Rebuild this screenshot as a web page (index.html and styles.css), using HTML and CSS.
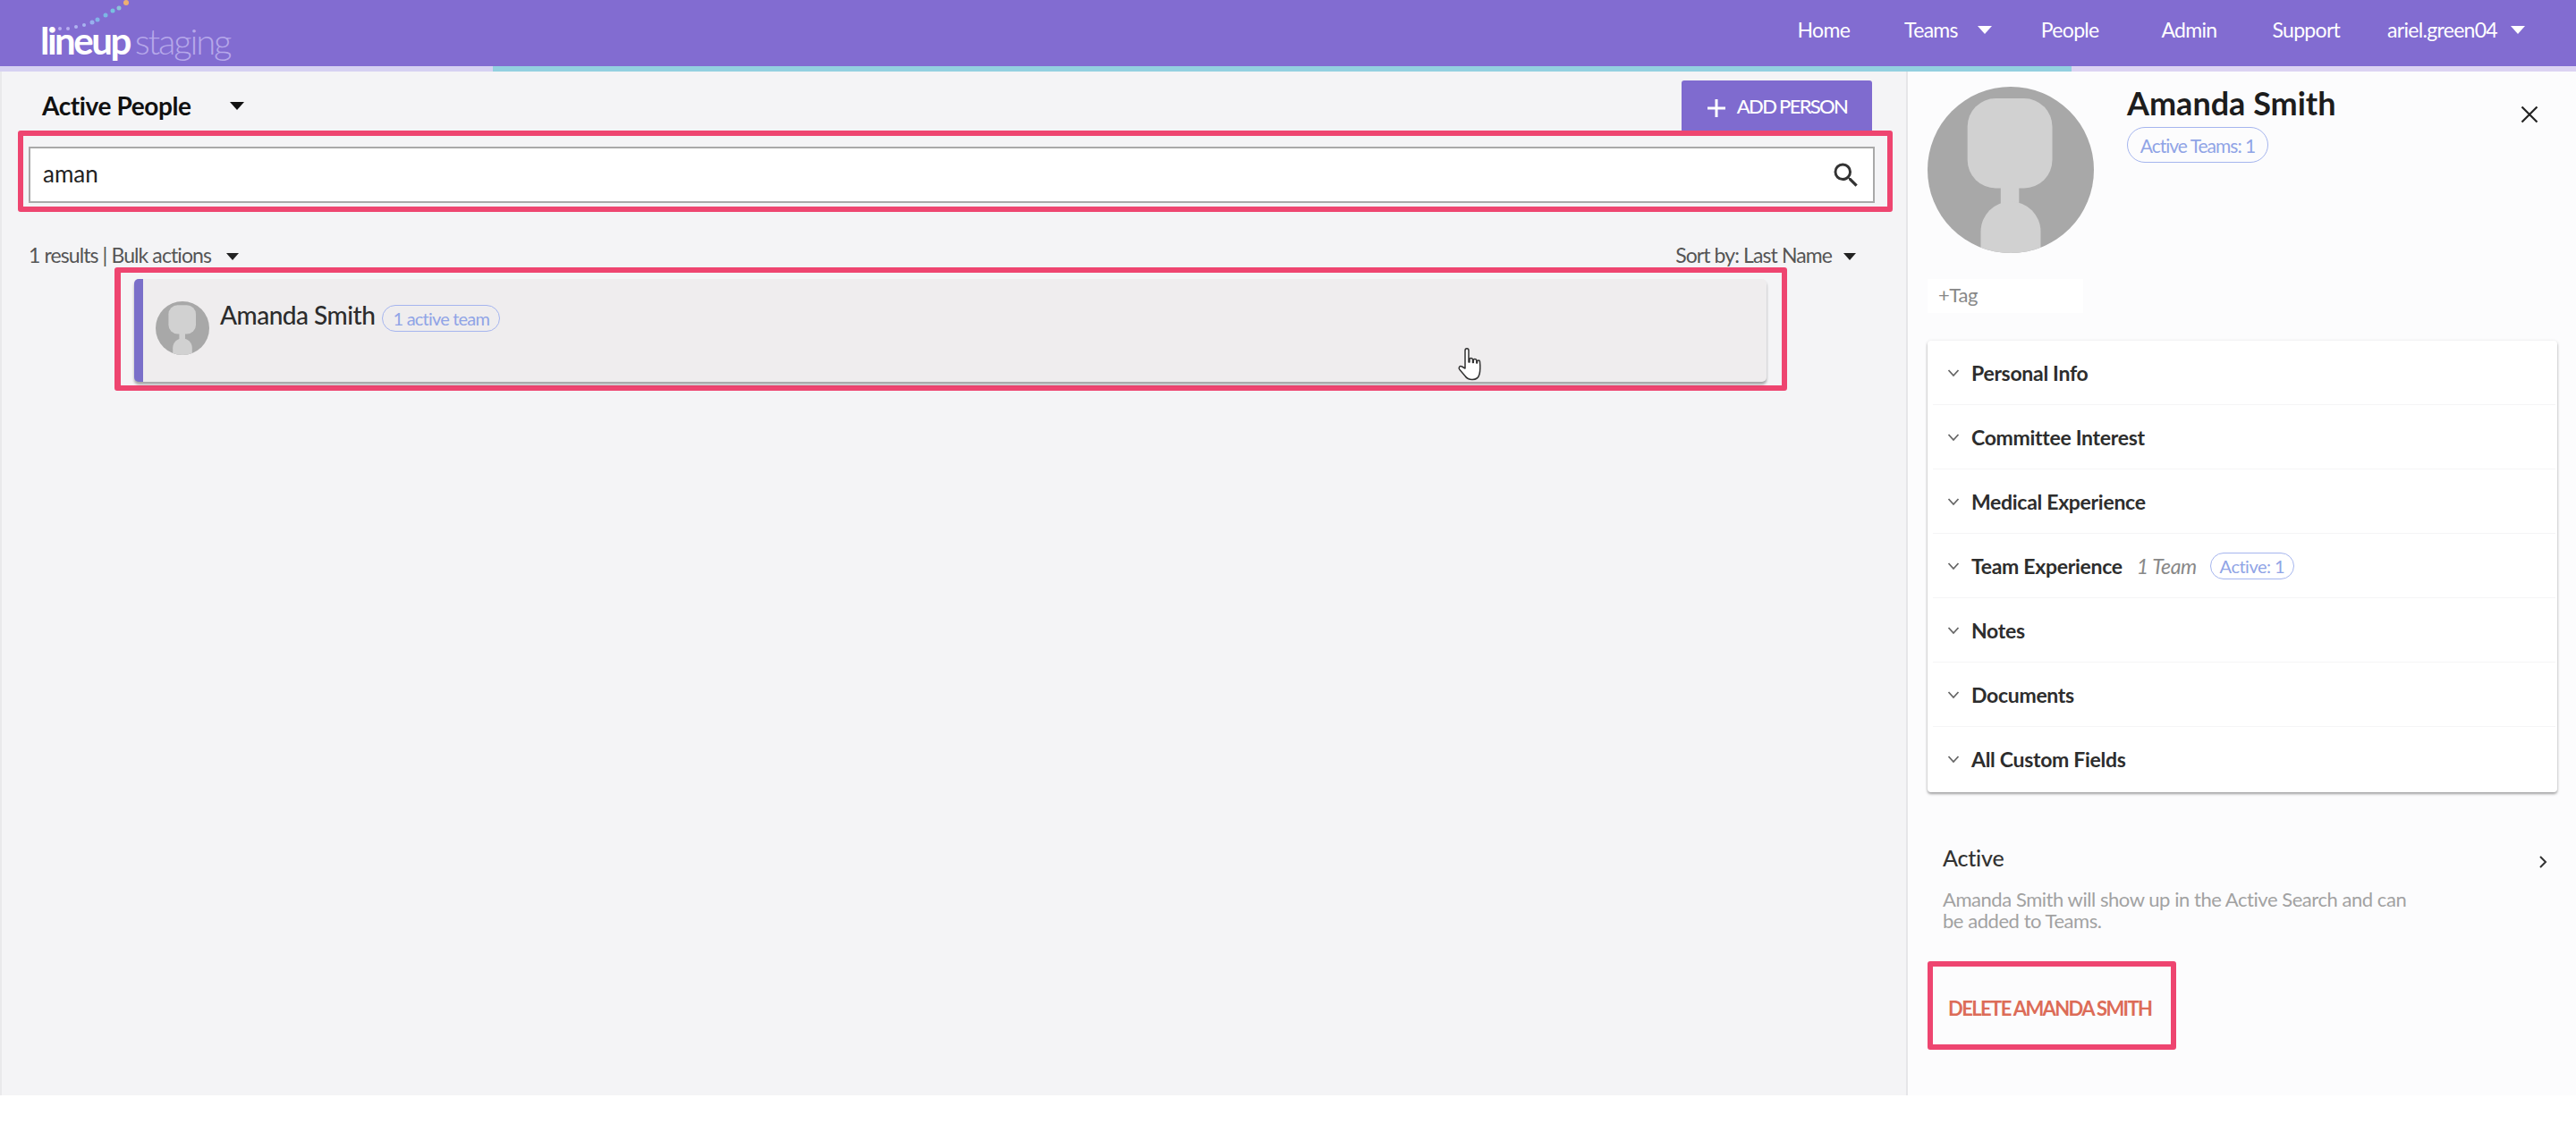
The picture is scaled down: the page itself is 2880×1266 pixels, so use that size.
FILE: index.html
```html
<!DOCTYPE html>
<html lang="en">
<head>
<meta charset="utf-8">
<title>Lineup staging - People</title>
<link rel="stylesheet" href="styles.css">
</head>
<body>
<svg class="defs" width="0" height="0" aria-hidden="true">
  <symbol id="avatar" viewBox="0 0 100 100">
    <clipPath id="round"><circle cx="50" cy="50" r="50"/></clipPath>
    <g clip-path="url(#round)">
      <rect width="100" height="100" fill="#a8a8a8"/>
      <rect x="24" y="7" width="51" height="54" rx="17" fill="#d1d1d1"/>
      <rect x="44" y="58" width="11" height="14" fill="#d1d1d1"/>
      <rect x="32" y="69" width="36" height="60" rx="18" fill="#d1d1d1"/>
    </g>
  </symbol>
  <symbol id="chev" viewBox="0 0 14 10">
    <path d="M1.500 2 7 8l5.500-6" fill="none" stroke="#666" stroke-width="1.800"/>
  </symbol>
</svg>

<header class="topbar">
  <div class="logo">
    <svg class="logo-dots" width="110" height="40" viewBox="0 0 110 40">
      <circle cx="19" cy="32" r="2" fill="#b9aef0"/><circle cx="28" cy="32" r="2" fill="#b9aef0"/>
      <circle cx="37" cy="30" r="2" fill="#b0b4f0"/><circle cx="46" cy="28" r="2" fill="#a8b4f0"/>
      <circle cx="55" cy="25" r="2.500" fill="#98b0ee"/><circle cx="61" cy="22" r="2.500" fill="#84b4e8"/>
      <circle cx="70" cy="17" r="2.500" fill="#7cb8e4"/><circle cx="78" cy="12" r="2.500" fill="#78c0e0"/>
      <circle cx="85" cy="9" r="2.500" fill="#8cc4d8"/><circle cx="93" cy="3" r="3" fill="#eeb070"/>
    </svg>
    <span class="logo-main">lineup</span><span class="logo-sub">staging</span>
  </div>
  <nav class="nav">
    <a class="nav-home">Home</a>
    <a class="nav-teams">Teams<i class="caret caret-nav"></i></a>
    <a class="nav-people">People</a>
    <a class="nav-admin">Admin</a>
    <a class="nav-support">Support</a>
    <a class="nav-user">ariel.green04<i class="caret caret-nav"></i></a>
  </nav>
</header>
<div class="stripe">
  <span class="seg seg-a"></span><span class="seg seg-b"></span><span class="seg seg-c"></span>
</div>

<main class="main">
  <section class="list-pane">
    <div class="title-row">
      <h1 class="title">Active People<i class="caret caret-title"></i></h1>
      <button class="add-btn"><svg width="22" height="22" viewBox="0 0 22 22"><path d="M11 1v20M1 11h20" stroke="#fff" stroke-width="3"/></svg>ADD PERSON</button>
    </div>
    <div class="mark mark-search">
      <div class="search">
        <span class="search-text">aman</span>
        <svg width="36" height="36" viewBox="0 0 24 24"><path d="M15.500 14h-.79l-.28-.27A6.470 6.470 0 0 0 16 9.500 6.500 6.500 0 1 0 9.500 16c1.610 0 3.090-.59 4.230-1.570l.27.28v.79l5 4.990L20.490 19l-4.990-5zm-6 0C7.010 14 5 11.990 5 9.500S7.010 5 9.500 5 14 7.010 14 9.500 11.990 14 9.500 14z" fill="#333"/></svg>
      </div>
    </div>
    <div class="results-row">
      <span>1 results | Bulk actions<i class="caret caret-small"></i></span>
      <span>Sort by: Last Name<i class="caret caret-sort"></i></span>
    </div>
    <div class="mark mark-card">
      <article class="person">
        <svg class="person-avatar"><use href="#avatar"/></svg>
        <span class="person-name">Amanda Smith</span>
        <span class="pill pill-card">1 active team</span>
        <svg class="cursor" width="28" height="37" viewBox="0 0 28 37">
          <path d="M9 3c0-3 4-3 4 0v13l1 0v-3c0-2 3-2 3.500 0v3.500l.8 0v-2.500c0-2 3-2 3.500 0v3l.7 0v-1.500c0-2 3-2 3 0 .5 5 .5 10-.5 14-1 4-4 6-8 6-3.500 0-6-1-8-4l-6-7c-2-2 0-5 2.500-3.500L9 23z" fill="#fff" stroke="#333" stroke-width="1.500" stroke-linejoin="round"/>
        </svg>
      </article>
    </div>
  </section>

  <aside class="detail-pane">
    <div class="detail-head">
      <svg class="detail-avatar"><use href="#avatar"/></svg>
      <div class="detail-id">
        <h2 class="detail-name">Amanda Smith</h2>
        <span class="pill pill-head">Active Teams: 1</span>
      </div>
      <svg class="close" width="20" height="20" viewBox="0 0 20 20"><path d="M1.500 1.500l17 17M18.500 1.500l-17 17" stroke="#222" stroke-width="2.200"/></svg>
    </div>
    <div class="tag">+Tag</div>
    <div class="accordion">
      <div class="row"><svg class="chev"><use href="#chev"/></svg><b>Personal Info</b></div>
      <div class="row"><svg class="chev"><use href="#chev"/></svg><b>Committee Interest</b></div>
      <div class="row"><svg class="chev"><use href="#chev"/></svg><b>Medical Experience</b></div>
      <div class="row"><svg class="chev"><use href="#chev"/></svg><b>Team Experience</b><em class="count">1 Team</em><span class="pill pill-row">Active: 1</span></div>
      <div class="row"><svg class="chev"><use href="#chev"/></svg><b>Notes</b></div>
      <div class="row"><svg class="chev"><use href="#chev"/></svg><b>Documents</b></div>
      <div class="row"><svg class="chev"><use href="#chev"/></svg><b>All Custom Fields</b></div>
    </div>
    <div class="status">
      <div class="status-head">
        <span class="status-title">Active</span>
        <svg width="11" height="16" viewBox="0 0 11 16"><path d="M2 2l6 6-6 6" fill="none" stroke="#333" stroke-width="2"/></svg>
      </div>
      <p class="status-desc">Amanda Smith will show up in the Active Search and can be added to Teams.</p>
    </div>
    <div class="mark mark-delete"><span class="delete">DELETE AMANDA SMITH</span></div>
  </aside>
</main>
</body>
</html>
```

FILE: styles.css
```css
* { box-sizing: border-box; }
html, body { margin: 0; padding: 0; background: #fff; }
body { font-family: Lato, "Noto Sans", sans-serif; color: #333; width: 2880px; height: 1266px; overflow: hidden; }
.defs { position: absolute; }
h1, h2, p { margin: 0; }

.topbar { height: 74px; background: #826cd1; display: flex; justify-content: space-between; color: #fff; }
.logo { position: relative; padding: 25px 0 0 45px; display: flex; gap: 6px; align-items: baseline; height: 74px; line-height: 40px; }
.logo-dots { position: absolute; left: 48px; top: 0; }
.logo-main { font-size: 42px; font-weight: 700; letter-spacing: -2.500px; color: #fff; }
.logo-sub { font-size: 40px; font-weight: 300; letter-spacing: -2.200px; color: #b6a8ea; }
.nav { display: flex; align-items: center; height: 66px; padding-right: 57px; font-size: 23px; letter-spacing: -.7px; }
.nav a { display: flex; align-items: center; white-space: nowrap; }
.nav-teams { margin-left: 61px; }
.nav-people { margin-left: 55px; }
.nav-admin { margin-left: 70px; }
.nav-support { margin-left: 62px; }
.nav-user { margin-left: 53px; }
.caret { display: inline-block; width: 0; height: 0; border-style: solid; border-color: currentColor transparent transparent; }
.caret-nav { border-width: 9px 8px 0; margin-left: 22px; color: #fff; }
.nav-user .caret-nav { margin-left: 15px; }

.stripe { height: 6px; display: flex; }
.seg-a { width: 551px; background: #d6d1f2; }
.seg-b { width: 1765px; background: #93d0e0; }
.seg-c { flex: 1; background: #dcd3f3; }

.main { height: 1145px; display: flex; }
.list-pane { flex: 1; background: #f4f4f6; border-left: 2px solid #e9e9eb; }
.title-row { display: flex; justify-content: space-between; align-items: center; padding: 10px 38px 0 45px; }
.title { font-size: 28px; font-weight: 700; color: #111; display: flex; align-items: center; letter-spacing: -.4px; }
.caret-title { border-width: 9px 8px 0; margin-left: 43px; color: #111; }
.add-btn { width: 213px; height: 56px; border: 0; border-radius: 3px 3px 0 0; background: #7f6bcf; color: #fff; font: 500 22px Lato, sans-serif; letter-spacing: -1.700px; display: flex; align-items: center; justify-content: center; gap: 12px; padding: 0; }
.add-btn svg { margin-top: 5px; }

.mark { border: 6px solid #ee4570; border-radius: 3px; }
.mark-search { margin: 0 15px 0 18px; padding: 12px 14px 4px 6px; height: 91px; }
.search { height: 63px; background: #fff; border: 2px solid #a9a9a9; display: flex; align-items: center; justify-content: space-between; padding: 0 12px 0 14px; }
.search-text { font-size: 26px; color: #222; padding-bottom: 3px; }

.results-row { height: 62px; display: flex; justify-content: space-between; align-items: center; padding: 33px 56px 0 30px; font-size: 23px; color: #555; letter-spacing: -.9px; }
.caret-small { border-width: 8px 7px 0; margin-left: 17px; color: #222; vertical-align: 3px; }
.caret-sort { border-width: 8px 7px 0; margin-left: 13px; color: #222; vertical-align: 3px; }

.mark-card { margin: 0 133px 0 126px; height: 138px; padding: 7px 17px 4px 15px; border-width: 6px 6px 6px 7px; }
.person { position: relative; height: 115px; background: #efedee; border-left: 10px solid #7a6fc9; border-radius: 5px; box-shadow: 0 3px 3px rgba(0,0,0,.32); display: flex; align-items: flex-start; padding: 25px 0 0 14px; }
.person-avatar { width: 60px; height: 60px; flex: none; }
.person-name { font-size: 28px; font-weight: 500; color: #2c2c2c; margin: -1px 0 0 12px; line-height: 32px; letter-spacing: -.5px; }
.cursor { position: absolute; left: 1469px; top: 77px; }

.pill { display: inline-flex; align-items: center; justify-content: center; border: 1.500px solid #a5b5ee; border-radius: 20px; color: #90a4e6; white-space: nowrap; }
.pill-card { width: 132px; height: 30px; font-size: 20px; margin: 4px 0 0 8px; letter-spacing: -.8px; }
.pill-head { width: 158px; height: 40px; font-size: 21px; letter-spacing: -1px; }
.pill-row { width: 94px; height: 30px; font-size: 20px; margin-left: 15px; letter-spacing: -.5px; }

.detail-pane { width: 749px; flex: none; background: #fcfcfd; border-left: 2px solid #e6e6e9; padding: 17px 22px 0 22px; }
.detail-head { display: flex; align-items: flex-start; }
.detail-avatar { width: 186px; height: 186px; flex: none; }
.detail-id { margin-left: 37px; display: flex; flex-direction: column; align-items: flex-start; }
.detail-name { font-size: 36px; font-weight: 700; color: #1d1d1d; line-height: 40px; margin-top: -2px; height: 47px; }
.close { margin: 21px 20px 0 auto; }
.tag { width: 174px; height: 38px; margin-top: 29px; background: #fff; font-size: 22px; color: #888; padding-left: 12px; line-height: 36px; letter-spacing: -.4px; }
.accordion { margin-top: 31px; width: 704px; height: 505px; background: #fff; border-radius: 4px; box-shadow: 0 2px 3px rgba(0,0,0,.35), 0 0 4px rgba(0,0,0,.06); }
.row { height: 72px; display: flex; align-items: center; margin: 0 2px 0 6px; padding-left: 16px; border-bottom: 1px solid #f5f5f6; font-size: 23px; color: #2d2d2d; letter-spacing: -.3px; }
.row:last-child { border-bottom: 0; }
.row b { font-weight: 700; white-space: nowrap; }
.chev { width: 14px; height: 10px; margin-right: 13px; flex: none; }
.count { margin-left: 16px; font-size: 23px; color: #888; white-space: nowrap; }

.status { margin-top: 57px; padding: 0 9px 0 17px; }
.status-head { display: flex; justify-content: space-between; align-items: center; height: 32px; }
.status-head svg { margin-top: 10px; }
.status-title { font-size: 25px; font-weight: 500; color: #333; letter-spacing: -.2px; }
.status-desc { width: 540px; margin-top: 19px; font-size: 22px; line-height: 24px; color: #a2a2a2; letter-spacing: -.45px; }
.mark-delete { margin-top: 33px; width: 278px; height: 99px; padding-top: 33px; padding-left: 17px; }
.delete { font-size: 22px; font-weight: 700; color: #dc6c58; white-space: nowrap; letter-spacing: -1.600px; }
```
